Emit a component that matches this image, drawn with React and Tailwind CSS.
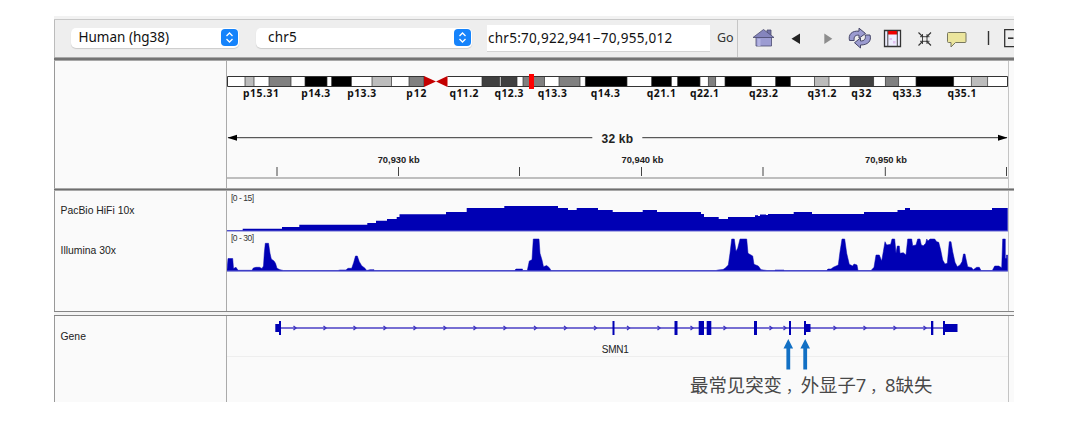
import React from 'react';

const BLUE = '#0000b4';

// [start, end, color]
const bands = [
  [245, 254, '#bcbcbc'], [269, 291, '#808080'], [305, 327, '#000'], [331.7, 351.3, '#000'],
  [372, 391.5, '#bcbcbc'], [409, 424, '#808080'], [482, 499.5, '#404040'], [501, 517, '#404040'],
  [523, 544.5, '#808080'], [559, 580, '#808080'], [585.3, 627, '#000'], [651.7, 671.3, '#000'],
  [677.7, 700, '#000'], [708.3, 715.7, '#808080'], [725, 751.3, '#000'], [775.7, 790.3, '#000'],
  [814.5, 829, '#bcbcbc'], [850, 873.7, '#404040'], [885.3, 898.7, '#808080'],
  [916, 953.7, '#000'], [971.3, 987.7, '#bcbcbc'],
];

// [label, center, width]
const bandLabels = [
  ['p15.31', 261, 36], ['p14.3', 315.7, 29], ['p13.3', 361.7, 29], ['p12', 416.3, 20],
  ['q11.2', 464, 29], ['q12.3', 509, 29], ['q13.3', 552.3, 29], ['q14.3', 605.3, 29],
  ['q21.1', 661.3, 29], ['q22.1', 704.5, 29], ['q23.2', 763.5, 29], ['q31.2', 822, 29],
  ['q32', 861.3, 20], ['q33.3', 907, 29], ['q35.1', 962, 29],
];

const ticks = [277, 398.5, 519.5, 641.5, 763, 885.3, 1006.5];
const tickLabels = [['70,930 kb', 398.7], ['70,940 kb', 642.5], ['70,950 kb', 886]];

// coverage steps: [x, top]
const pacbio = [
  [227, 230.3], [242.7, 228.7], [282, 227], [299.3, 224.7], [367.3, 223], [376, 220.8], [387, 219],
  [396.7, 217], [399.5, 214.2], [446, 212], [466.7, 208], [504.3, 206], [558, 208], [568, 210],
  [576.7, 208], [598, 210], [612.7, 212], [642.7, 210], [657, 212], [701, 214], [704, 217],
  [718.7, 219], [728, 217], [755, 215.3], [758, 216], [760, 214.5], [766, 215], [768, 214],
  [793.7, 212], [812, 214], [864, 212], [897.5, 210], [905, 208], [910, 210], [992, 208],
];

const illumina =
  'M227 271V270.5L228 258.5H232.7L233.5 268.5L236 267.3L238 270.3H252L253.3 268L256 267.3H259.5L262 268.5L263.5 266L264.3 253L265.3 243.3H268.5L270 253.3L271.3 259L274 261L275.5 263.3L277 268.3L280 269.7L283.5 270.5' +
  'H338L340 270H346L348 268.3H351.7L353.7 262.5L355.5 256H357.3L359.3 261.7L361.7 265.7L365 268.3L366.7 270.5L370 269.7H374' +
  'V270.5H514.5L516 269H522.5V270.5H527.3L529.3 261L532 259.7L533.3 239H539L540 253.3L542 260L543.5 266.7L546.7 265.5L549.3 267.7L551 270.5' +
  'H716L718 270L723 269.5L725 268.3L728.3 265L730 253.3L731.7 239H734.3L736 251.5L737.7 248.3L740 239H746.7L748 253.3L752.7 256L754 264.3L758.3 266L761 269.7L767 270.5H775V270H784' +
  'V270.5H826.5L828 269H831L833.3 267.3L838.3 265L840 251.7L842 239H844.7L846.7 253.3L849.3 264.3L852.7 266L854 264L857 265L858 270.5' +
  'H871L874 267.3L876 255H879.3L881.7 261L883.3 251.7L885 241.7L886.7 245L890.7 244.3L892 239H894.7L896 253.3L897.3 246H899.3L900 253.3L903.3 252.7L906 255L907.7 239H911.7L912.7 245.7L916 245L917.7 239H920L921.3 245L923.3 245.7L925.7 243.3L926.7 239L928 241L930 239H934.7L936.7 241.7L938.7 242.3L940.7 250L942.7 260L945 264L947.3 263.3L949.3 241.7H951L952.7 251.7L955 262.3L957.3 266.7L960 265L962 261.7L963.5 254H965L966 259L967.7 266.7L971.7 267.7L973.3 269.7L976.7 267.3H979.3L981 270.5' +
  'H992.3L994.7 266H998.7L1001.7 267.7L1002.7 239H1005.3V258.3H1006.5V255H1007.5V271Z';

// [x, width, y, height]
const exons = [
  [275.3, 4, 324, 8], [279, 2, 321, 14], [612.5, 2, 321, 14], [674.5, 3, 321, 14], [698.7, 5.3, 321, 14],
  [706.7, 4.6, 321, 14], [754, 3, 321, 14], [789, 2, 321, 14], [804, 2, 321, 14],
  [806, 4.5, 324, 8], [931, 2.3, 321, 14], [943, 2, 321, 14], [945, 12.5, 324, 8],
];

const chevrons = [
  295, 325, 355, 385, 415, 445, 475, 505, 535.5, 565.5, 595.5, 628.5, 659, 692, 725, 771, 785, 835,
  865, 895, 925,
];

const coveragePath = (steps) =>
  steps.reduce((d, [x, y]) => `${d}H${x}V${y}`, 'M227 231') + 'H1007.7V231Z';

const Stepper = () => (
  <span className="flex h-[17px] w-[17px] shrink-0 items-center justify-center rounded-[4px] bg-[#1583fb]">
    <svg width="9" height="13" viewBox="0 0 9 13" fill="none" stroke="#fff" strokeWidth="1.3">
      <path d="M1.5 5L4.5 2L7.5 5M1.5 8L4.5 11L7.5 8" />
    </svg>
  </span>
);

const Select = ({ value, className }) => (
  <div
    className={`flex h-5 items-center justify-between rounded-[5px] bg-white pr-px shadow-[0_1px_1px_rgba(0,0,0,0.15)] ${className}`}
  >
    <span>{value}</span>
    <Stepper />
  </div>
);

const ToolbarIcons = () => (
  <svg width="276" height="37" viewBox="738 20 276 37" className="shrink-0">
    {/* home */}
    <g stroke="#4b4b70" strokeWidth="0.8">
      <path d="M767 30h4v6h-4z" fill="#7474a8" />
      <path d="M756 37h15.5v9h-15.5z" fill="#9c9cd2" />
      <path d="M753 37.5L763.5 29.5L774 37.5z" fill="#8585bd" />
    </g>
    <path d="M757.5 39h3v7h-3z" fill="#b3b3e2" />
    {/* back / forward */}
    <path d="M800 33.5v10.5L791.5 38.8z" fill="#222" />
    <path d="M824.3 33.5v10.5L832.3 38.8z" fill="#8d8d8d" />
    {/* refresh */}
    <g fill="#9b9bd0" stroke="#464668" strokeWidth="1" strokeLinejoin="round">
      <path d="M849.5 40.5C848 34.5 852 30.5 859 31.2V28.2L865.5 33.5L859 38.2V35.2C855.5 34.8 853.5 36.5 854.2 40.5z" />
      <path d="M870 35C871.8 41 868 45 860.5 45V48L854.5 42.7L860.5 38V41C864.5 41 866 39 865.2 35z" />
    </g>
    {/* region of interest */}
    <path d="M884.5 30.5h16v16h-16z" fill="#eef" stroke="#333" strokeWidth="1.3" />
    <path d="M888 31h9.5v3.5H888z" fill="#f00000" />
    <path d="M887.8 31v15.5M897.3 31v15.5" stroke="#444" strokeWidth="1" />
    <path d="M889.5 38h2.5v2h-2.5zM893 41h2.5v2.5H893z" fill="#e3c0ef" />
    {/* fit to window */}
    <g fill="none" stroke="#333" strokeWidth="1.1">
      <path d="M918.5 32.5L923 37M931 32.5L926.5 37M918.5 45.5L923 41M931 45.5L926.5 41" />
      <path d="M920 36.7h9.5M920 41.3h9.5M922.5 34v10M927 34v10" strokeWidth="0.9" />
    </g>
    {/* popup text */}
    <path
      d="M948.5 32.5h16.5q1 0 1 1v8q0 1-1 1h-9.5l-4.5 4.5v-4.5h-2.5q-1 0-1-1v-8q0-1 1-1z"
      fill="#ebe59d"
      stroke="#77775f"
      strokeWidth="1"
    />
    <path d="M988.5 31v14" stroke="#333" strokeWidth="1.4" />
    {/* zoom out */}
    <path d="M1014 29.7h-9.3v17H1014" fill="none" stroke="#333" strokeWidth="1.3" />
    <path d="M1008 38.2h5.5" stroke="#333" strokeWidth="1.6" />
  </svg>
);

const Toolbar = () => (
  <div className="flex h-[37px] items-center border-l border-[#bbb] bg-[#eeeeee] font-['Noto_Sans','Open_Sans',sans-serif] text-[13.5px] text-[#111]">
    <Select value="Human (hg38)" className="ml-4 mb-0.5 w-[168px] pl-[7.5px]" />
    <Select value="chr5" className="ml-[17px] mb-0.5 w-[216px] pl-3 tracking-[0.2px]" />
    <div className="ml-[15px] flex h-[27px] w-[223px] items-center border-b border-[#d4d4d4] bg-white pl-px tracking-[0.27px]">
      chr5:70,922,941−70,955,012
    </div>
    <div className="flex h-full w-[28px] items-center border-r border-[#c6c6c6] pl-[7px] text-[12.5px] text-[#333]">
      Go
    </div>
    <ToolbarIcons />
  </div>
);

const Ruler = () => (
  <svg width="782" height="127" viewBox="227 61 782 127" className="block">
    {/* ideogram */}
    <rect x="227" y="76.5" width="197" height="10" fill="#fff" />
    <rect x="447.5" y="76.5" width="560" height="10" fill="#fff" />
    {bands.map(([x1, x2, color]) => (
      <rect key={x1} x={x1} y="76.5" width={x2 - x1} height="10" fill={color} stroke="#333" strokeWidth="0.7" />
    ))}
    <path d="M424 76.5H227.5v10H424M447.5 76.5H1007.5v10H447.5" fill="none" stroke="#333" />
    <path d="M424 76L436 81.5L424 87zM447.5 76L436 81.5L447.5 87z" fill="#c40000" />
    <rect x="529" y="74" width="5" height="15" fill="#f00" />
    <g fontFamily="'Noto Sans', sans-serif" fontWeight="bold" fontSize="10.3" fill="#111" textAnchor="middle">
      {bandLabels.map(([label, x, width]) => (
        <text key={label} x={x} y="96.7" textLength={width}>
          {label}
        </text>
      ))}
    </g>

    {/* span */}
    <path d="M228 137.7H592.3M642.3 137.7H1007" stroke="#333" />
    <path d="M227.5 137.7L237 134.7V140.7zM1007.5 137.7L998 134.7V140.7z" fill="#000" />
    <g fontFamily="'Liberation Sans', Arial, sans-serif" fontWeight="bold" fill="#222" textAnchor="middle">
      <text x="617.3" y="143" fontSize="12" textLength="31.5">32 kb</text>
      {tickLabels.map(([label, x]) => (
        <text key={label} x={x} y="162.6" fontSize="9" textLength="42" lengthAdjust="spacingAndGlyphs">
          {label}
        </text>
      ))}
    </g>
    {ticks.map((x) => (
      <path key={x} d={`M${x} 167v9`} stroke="#444" />
    ))}
    <path d="M227 178H1008" stroke="#aaa" strokeWidth="1.3" />
  </svg>
);

const Coverage = () => (
  <svg width="782" height="120" viewBox="227 191 782 120" className="block">
    <path d={coveragePath(pacbio)} fill={BLUE} />
    <path d={illumina} fill={BLUE} stroke={BLUE} strokeWidth="0.5" />
    <path d="M227 231H1008M227 271H1008" stroke="#6464d2" />
    <g fontFamily="'Liberation Sans', Arial, sans-serif" fontSize="8.5" fill="#333">
      <text x="231" y="201" textLength="23">[0 - 15]</text>
      <text x="231" y="241" textLength="23">[0 - 30]</text>
    </g>
  </svg>
);

const GeneTrack = () => (
  <svg width="782" height="57" viewBox="227 316 782 57" className="block">
    <path d="M227 356.5H1008" stroke="#eeeeee" />
    <path d="M281 328H944" stroke="#4a3fc4" strokeWidth="1.3" />
    {chevrons.map((x) => (
      <path key={x} d={`M${x - 1.5} 326l2.5 2l-2.5 2`} fill="none" stroke="#3a30c0" strokeWidth="1.3" />
    ))}
    {exons.map(([x, w, y, h]) => (
      <rect key={x} x={x} y={y} width={w} height={h} fill={BLUE} />
    ))}
    <text
      x="615.3"
      y="353"
      fontFamily="'Liberation Sans', Arial, sans-serif"
      fontSize="10"
      fill="#222"
      textAnchor="middle"
      textLength="27"
    >
      SMN1
    </text>
    {[788.3, 805.2].map((x) => (
      <path key={x} d={`M${x} 339l4.8 9.5h-2.9v21h-3.8v-21h-2.9z`} fill="#1270c4" />
    ))}
  </svg>
);

const Comma = () => <span className="inline-block w-[18.7px] pl-1 text-[14.5px]">{'\uff0c'}</span>;

const Panel = ({ names, className, children }) => (
  <div className={`flex border-l border-[#999] bg-[#fafafa] ${className}`}>
    <div className="w-[172px] shrink-0 border-r border-[#aaa] pl-[5.5px] text-[10.4px] text-[#222]">{names}</div>
    <div className="w-[782px] shrink-0 border-r border-[#c4c4c4]">{children}</div>
  </div>
);

const Divider = () => <div className="h-[3px] border-y border-[#a8a8a8] bg-[#6e6e6e]" />;

const App = () => (
  <div className="h-[435px] w-[1080px] overflow-hidden bg-white pt-4 pl-[54px] font-['Liberation_Sans',Arial,sans-serif]">
    <div className="w-[960px] overflow-hidden">
      <div className="h-1 border-b border-[#c8c8c8] bg-[#f2f2f2]" />
      <Toolbar />
      <div className="h-1 border-y border-[#a8a8a8] bg-[#747474]" />
      <Panel className="h-[127px]">
        <Ruler />
      </Panel>
      <Divider />
      <Panel
        className="h-[120px]"
        names={
          <>
            <div className="h-10 pt-[12px] leading-4">PacBio HiFi 10x</div>
            <div className="h-10 pt-[12px] leading-4">Illumina 30x</div>
          </>
        }
      >
        <Coverage />
      </Panel>
      <div className="h-[5px] border-y border-[#858585] bg-[#f4f4f4]" />
      <Panel className="h-[86px]" names={<div className="pt-[12.5px] leading-4">Gene</div>}>
        <GeneTrack />
        <div className="pl-[463px] font-['Open_Sans','Noto_Sans_CJK_SC',sans-serif] text-[18.4px] leading-6 whitespace-nowrap text-[#484848]">
          最常见突变
          <Comma />
          外显子7
          <Comma />
          8缺失
        </div>
      </Panel>
    </div>
  </div>
);

export default App;
